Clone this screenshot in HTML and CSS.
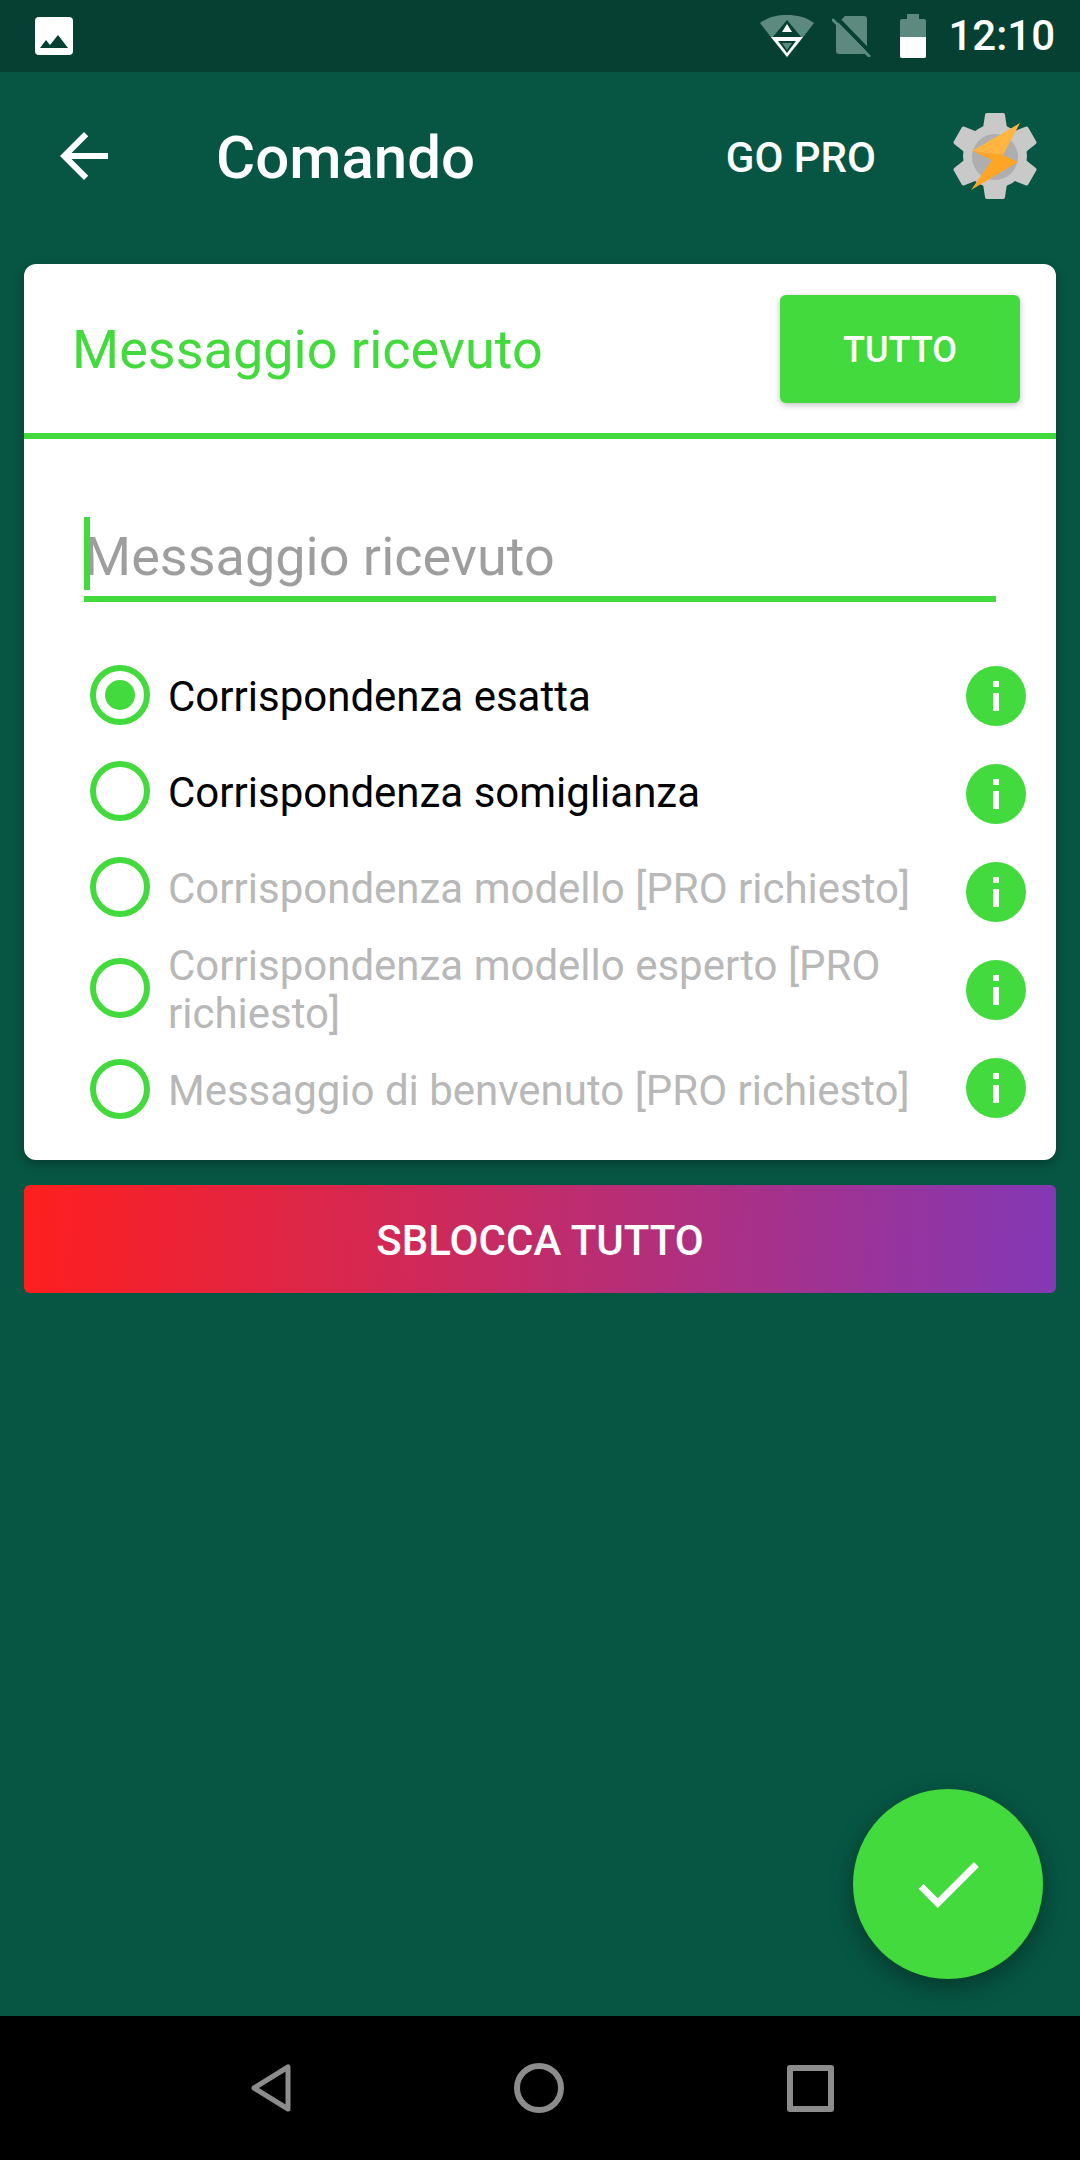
FILE: index.html
```html
<!DOCTYPE html>
<html lang="en">
<head>
  <meta charset="UTF-8" />
  <title>Comando</title>
  <link rel="stylesheet" href="styles.css">
</head>
<body>
  <svg class="defs" width="0" height="0">
    <symbol id="icon-info" viewBox="0 0 60 60">
      <circle cx="30" cy="30" r="30" fill="#42da3d"/>
      <rect x="27" y="15" width="6" height="6" fill="#fff"/>
      <rect x="27" y="27" width="6" height="18" fill="#fff"/>
    </symbol>
  </svg>

  <header class="status-bar">
    <svg class="status-pic" viewBox="0 0 38 38">
      <rect width="38" height="38" rx="4" fill="#fff"/>
      <path d="M5 31l6-8 4 5 8-10 10 13z" fill="#064033"/>
    </svg>
    <div class="status-right">
      <svg class="status-wifi" viewBox="0 0 54 44">
        <path d="M0 9C8 3 17 1 27 1s19 2 27 8L27 44z" fill="#5c8a7e"/>
        <path d="M27 6l15 18-15 20-15-20z" fill="#064033"/>
        <path d="M27 10l5 8H22z" fill="#fff"/>
        <path d="M11 23h32L27 43z" fill="#fff"/>
        <path d="M18 27h18l-9 12z" fill="#064033"/>
        <path d="M22 29h10l-5 7z" fill="#5c8a7e"/>
      </svg>
      <svg class="status-sim" viewBox="0 0 40 42">
        <path d="M13 1h19a3 3 0 0 1 3 3v32a3 3 0 0 1-3 3H7a3 3 0 0 1-3-3V10z" fill="#5c8a7e"/>
        <path d="M3 1l37 38" stroke="#064033" stroke-width="4"/>
        <path d="M1 5l36 36" stroke="#5c8a7e" stroke-width="3" stroke-linecap="round"/>
      </svg>
      <div class="battery">
        <span class="battery-cap"></span>
        <span class="battery-body"><span class="battery-fill"></span></span>
      </div>
      <span class="clock">12:10</span>
    </div>
  </header>

  <div class="toolbar">
    <svg class="back-icon" viewBox="0 0 24 24"><path d="M20 11H7.83l5.59-5.59L12 4l-8 8 8 8 1.41-1.41L7.83 13H20v-2z" fill="#fff"/></svg>
    <h1 class="title">Comando</h1>
    <span class="go-pro">GO PRO</span>
    <svg class="app-logo" viewBox="0 0 90 90">
      <g fill="#c9c9c9">
        <path id="tooth" d="M35 4a2 2 0 0 1 2-2h16a2 2 0 0 1 2 2l3 20H32z"/>
        <use href="#tooth" transform="rotate(60 45 45)"/>
        <use href="#tooth" transform="rotate(120 45 45)"/>
        <use href="#tooth" transform="rotate(180 45 45)"/>
        <use href="#tooth" transform="rotate(240 45 45)"/>
        <use href="#tooth" transform="rotate(300 45 45)"/>
        <circle cx="45" cy="45" r="32"/>
      </g>
      <circle cx="45" cy="46" r="23" fill="#aeaeae"/>
      <path d="M70 12L22 40l31 4z" fill="#ffb53f"/>
      <path d="M22 40l31 4 15 7-47 28 21-30z" fill="#ffa526"/>
    </svg>
  </div>

  <main class="content">
    <section class="card">
      <div class="card-head">
        <h2 class="card-title">Messaggio ricevuto</h2>
        <button class="all-btn">TUTTO</button>
      </div>
      <div class="card-body">
        <div class="field">
          <span class="caret"></span>
          <span class="placeholder">Messaggio ricevuto</span>
        </div>
        <div class="options">
          <ul class="radio-list">
            <li class="radio-row"><span class="radio checked"></span><span class="radio-label">Corrispondenza esatta</span></li>
            <li class="radio-row"><span class="radio"></span><span class="radio-label">Corrispondenza somiglianza</span></li>
            <li class="radio-row off"><span class="radio"></span><span class="radio-label">Corrispondenza modello [PRO richiesto]</span></li>
            <li class="radio-row off tall"><span class="radio"></span><span class="radio-label">Corrispondenza modello esperto [PRO richiesto]</span></li>
            <li class="radio-row off"><span class="radio"></span><span class="radio-label">Messaggio di benvenuto [PRO richiesto]</span></li>
          </ul>
          <div class="info-list">
            <svg class="info"><use href="#icon-info"/></svg>
            <svg class="info"><use href="#icon-info"/></svg>
            <svg class="info"><use href="#icon-info"/></svg>
            <svg class="info"><use href="#icon-info"/></svg>
            <svg class="info"><use href="#icon-info"/></svg>
          </div>
        </div>
      </div>
    </section>
    <button class="unlock-btn">SBLOCCA TUTTO</button>

    <button class="fab">
      <svg viewBox="0 0 24 24"><path d="M9 16.17L4.83 12l-1.42 1.41L9 19 21 7l-1.41-1.41z" fill="#fff"/></svg>
    </button>
  </main>

  <nav class="nav-bar">
    <svg class="nav-back" viewBox="0 0 40 48"><path d="M3 24L37 3v42z" fill="none" stroke="#8c8c8c" stroke-width="5" stroke-linejoin="round"/></svg>
    <span class="nav-home"></span>
    <span class="nav-recent"></span>
  </nav>
</body>
</html>
```

FILE: styles.css
```css
:root {
  --green: #42da3d;
  --bg: #075643;
  --status: #064033;
  --nav-grey: #8c8c8c;
}

* {
  box-sizing: border-box;
}

html, body {
  margin: 0;
  height: 100%;
}

body {
  display: flex;
  flex-direction: column;
  background: var(--bg);
  font-family: Roboto, "Noto Sans", sans-serif;
  color: #000;
}

.defs {
  position: absolute;
}

/* status bar */
.status-bar {
  display: flex;
  align-items: center;
  justify-content: space-between;
  height: 72px;
  padding: 0 25px 0 35px;
  background: var(--status);
  flex: none;
}

.status-pic {
  width: 38px;
  height: 38px;
}

.status-right {
  display: flex;
  align-items: center;
}

.status-wifi {
  width: 54px;
  height: 44px;
  margin-right: 18px;
}

.status-sim {
  width: 40px;
  height: 42px;
  margin-right: 28px;
}

.battery {
  display: flex;
  flex-direction: column;
  align-items: center;
  width: 26px;
  height: 44px;
  margin-right: 22px;
}

.battery-cap {
  width: 12px;
  height: 5px;
  background: #5c8a7e;
}

.battery-body {
  display: flex;
  flex-direction: column;
  justify-content: flex-end;
  width: 100%;
  flex: 1;
  background: #5c8a7e;
  border-radius: 2px;
  overflow: hidden;
}

.battery-fill {
  height: 21px;
  background: #fff;
}

.clock {
  color: #fff;
  font-size: 42px;
  font-weight: 500;
  line-height: 44px;
}

/* toolbar */
.toolbar {
  display: flex;
  align-items: center;
  height: 168px;
  padding: 0 40px 0 48px;
  flex: none;
}

.back-icon {
  width: 72px;
  height: 72px;
}

.title {
  margin: 0 0 0 96px;
  padding-top: 2px;
  flex: 1;
  color: #fff;
  font-size: 60px;
  font-weight: 500;
}

.go-pro {
  margin-right: 74px;
  padding-top: 2px;
  color: #fff;
  font-size: 42px;
  font-weight: 500;
}

.app-logo {
  width: 90px;
  height: 90px;
}

/* main card */
.content {
  position: relative;
  flex: 1;
  padding: 24px 24px 0;
}

.card {
  background: #fff;
  border-radius: 12px;
  height: 896px;
  box-shadow: 0 4px 12px rgba(0, 0, 0, 0.3);
}

.card-head {
  display: flex;
  align-items: center;
  justify-content: space-between;
  height: 175px;
  padding: 0 36px 0 48px;
  border-bottom: 6px solid var(--green);
}

.card-title {
  margin: 0;
  padding-top: 2px;
  color: var(--green);
  font-size: 54px;
  font-weight: 400;
}

.all-btn {
  width: 240px;
  height: 108px;
  padding: 2px 0 0;
  border: none;
  border-radius: 6px;
  background: var(--green);
  color: #fff;
  font-family: inherit;
  font-size: 36px;
  font-weight: 500;
  box-shadow: 0 2px 6px rgba(0, 0, 0, 0.25);
}

.card-body {
  padding: 78px 30px 0 60px;
}

.field {
  position: relative;
  height: 85px;
  margin-right: 30px;
  border-bottom: 6px solid var(--green);
}

.caret {
  position: absolute;
  left: 0;
  top: 0;
  width: 6px;
  height: 73px;
  background: var(--green);
}

.placeholder {
  display: block;
  padding-top: 3px;
  color: rgba(0, 0, 0, 0.38);
  font-size: 54px;
  line-height: 73px;
}

.options {
  display: flex;
  justify-content: space-between;
  margin-top: 45px;
}

.radio-list {
  margin: 0 0 0 6px;
  padding: 0;
  list-style: none;
  width: 830px;
}

.radio-row {
  display: flex;
  align-items: center;
  min-height: 96px;
  font-size: 42px;
  line-height: 48px;
}

.radio-row.tall {
  min-height: 106px;
}

.radio-row.off {
  color: #b8b8b8;
}

.radio {
  display: flex;
  align-items: center;
  justify-content: center;
  width: 60px;
  height: 60px;
  margin-right: 18px;
  border: 6px solid var(--green);
  border-radius: 50%;
  flex: none;
}

.radio.checked::after {
  content: "";
  width: 30px;
  height: 30px;
  border-radius: 50%;
  background: var(--green);
}

.radio-label {
  padding-top: 3px;
}

.info-list {
  display: flex;
  flex-direction: column;
  gap: 38px;
  padding-top: 19px;
}

.info {
  display: block;
  width: 60px;
  height: 60px;
}

.unlock-btn {
  display: block;
  width: 100%;
  height: 108px;
  margin-top: 25px;
  padding: 3px 0 0;
  border: none;
  border-radius: 6px;
  background: linear-gradient(92deg, #ff1f1f, #8338b5);
  color: #fff;
  font-family: inherit;
  font-size: 42px;
  font-weight: 500;
}

.fab {
  position: absolute;
  right: 37px;
  bottom: 37px;
  display: flex;
  align-items: center;
  justify-content: center;
  width: 190px;
  height: 190px;
  padding: 0;
  border: none;
  border-radius: 50%;
  background: var(--green);
  box-shadow: 0 8px 24px rgba(0, 0, 0, 0.35);
}

.fab svg {
  width: 82px;
  height: 82px;
}

/* android nav */
.nav-bar {
  display: flex;
  align-items: center;
  justify-content: center;
  gap: 223px;
  height: 144px;
  padding-left: 4px;
  background: #000;
  flex: none;
}

.nav-back {
  width: 40px;
  height: 48px;
}

.nav-home {
  width: 50px;
  height: 50px;
  border: 6px solid var(--nav-grey);
  border-radius: 50%;
}

.nav-recent {
  width: 47px;
  height: 47px;
  border: 6px solid var(--nav-grey);
  border-radius: 3px;
}
```
